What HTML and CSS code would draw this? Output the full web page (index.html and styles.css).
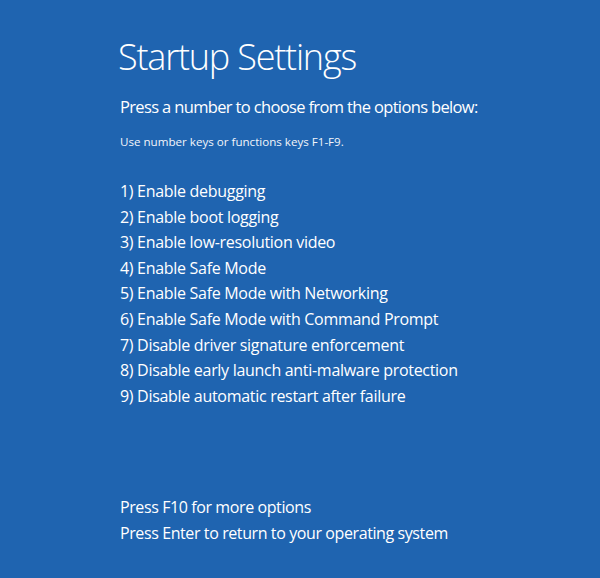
FILE: index.html
```html
<!DOCTYPE html>
<html>
<head>
<meta charset="utf-8">
<link rel="stylesheet" href="styles.css">
</head>
<body>
<main class="screen">
  <h1 class="title">Startup Settings</h1>
  <p class="lead">Press a number to choose from the options below:</p>
  <p class="hint">Use number keys or functions keys F1-F9.</p>
  <ol class="options">
    <li>1) Enable debugging</li>
    <li>2) Enable boot logging</li>
    <li>3) Enable low-resolution video</li>
    <li>4) Enable Safe Mode</li>
    <li>5) Enable Safe Mode with Networking</li>
    <li>6) Enable Safe Mode with Command Prompt</li>
    <li>7) Disable driver signature enforcement</li>
    <li>8) Disable early launch anti-malware protection</li>
    <li>9) Disable automatic restart after failure</li>
  </ol>
  <div class="footer">
    <p>Press F10 for more options</p>
    <p>Press Enter to return to your operating system</p>
  </div>
</main>
</body>
</html>
```
FILE: styles.css
```css
html, body {
  margin: 0;
  padding: 0;
  background: #1f64b0;
}
.screen {
  width: 600px;
  height: 578px;
  box-sizing: border-box;
  padding: 35px 0 0 120px;
  color: #fff;
  font-family: "Open Sans", "Noto Sans", sans-serif;
  display: flex;
  flex-direction: column;
}
.title {
  margin: 0 0 0 -2px;
  font-size: 36px;
  font-weight: 300;
  line-height: 44px;
  letter-spacing: -1.2px;
}
.lead {
  margin: 17px 0 0;
  font-size: 16.5px;
  line-height: 22px;
  letter-spacing: -0.65px;
}
.hint {
  margin: 16px 0 0;
  font-size: 11.6px;
  line-height: 16px;
  color: #f2f5fa;
}
.options {
  list-style: none;
  margin: 29px 0 0;
  padding: 0;
  font-size: 16px;
  line-height: 25.6px;
  letter-spacing: -0.3px;
}
.footer {
  margin-top: auto;
  padding-bottom: 32px;
  font-size: 16px;
  line-height: 25.5px;
  letter-spacing: -0.4px;
}
.footer p {
  margin: 0;
}
```
